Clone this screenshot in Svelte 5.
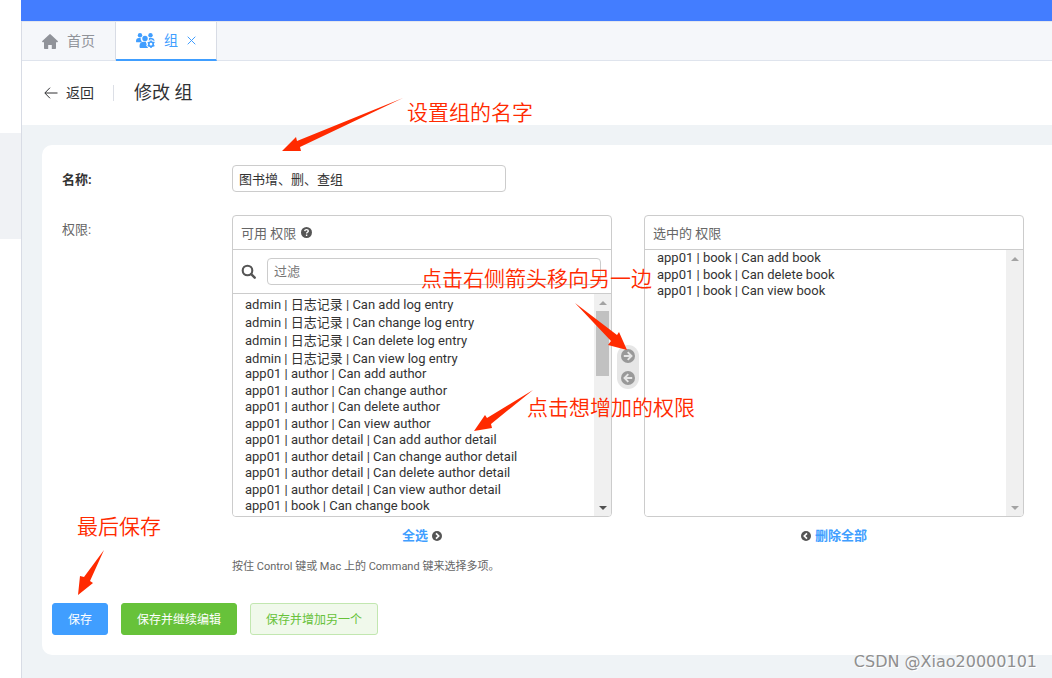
<script>
  const available = [
    'admin | 日志记录 | Can add log entry',
    'admin | 日志记录 | Can change log entry',
    'admin | 日志记录 | Can delete log entry',
    'admin | 日志记录 | Can view log entry',
    'app01 | author | Can add author',
    'app01 | author | Can change author',
    'app01 | author | Can delete author',
    'app01 | author | Can view author',
    'app01 | author detail | Can add author detail',
    'app01 | author detail | Can change author detail',
    'app01 | author detail | Can delete author detail',
    'app01 | author detail | Can view author detail',
    'app01 | book | Can change book'
  ];
  const chosen = [
    'app01 | book | Can add book',
    'app01 | book | Can delete book',
    'app01 | book | Can view book'
  ];
  let name = $state('图书增、删、查组');
  let filter = $state('');
</script>

{#snippet scrollbar(active)}
  <div class="scrollbar" aria-hidden="true">
    <svg width="17" height="17" viewBox="0 0 17 17"><path d="M5 11h8L9 7z" fill="#a3a3a3" /></svg>
    {#if active}<div class="thumb"></div>{/if}
    <svg class="down" width="17" height="17" viewBox="0 0 17 17"><path d="M5 7h8l-4 4z" fill={active ? '#505050' : '#a3a3a3'} /></svg>
  </div>
{/snippet}

<div class="app">
  <aside><div class="side-item"></div></aside>
  <div class="main">
    <div class="topbar"></div>
    <nav class="tabs">
      <a class="tab" href="#home">
        <svg width="16" height="15" viewBox="0 0 16 15" fill="currentColor"><path d="M7.3.4a1 1 0 0 1 1.4 0l7 6.6c.5.5.2 1.2-.5 1.2H14V14c0 .6-.4 1-1 1H9.800v-4H6.200v4H3c-.6 0-1-.4-1-1V8.200H.8C.1 8.200-.2 7.500.3 7z" /></svg>
        <span>首页</span>
      </a>
      <a class="tab current" href="#group">
        <svg width="19" height="15" viewBox="0 0 19 15" fill="currentColor">
          <circle cx="4" cy="2.300" r="2.200" /><circle cx="14.500" cy="2.300" r="2.200" /><circle cx="9" cy="5.500" r="2.700" />
          <path d="M0 8c0-2 1.200-3 3-3h1.700c-.2 1.600.3 2.700 1.200 3.400C5.500 8.700 5 9 4.700 9.200H.6C.2 9.200 0 8.900 0 8zM13 5h2.500c1.800 0 3 1.200 3 3.200-.7-.7-1.400-.9-1.900-.9l-.6-.8h-2l-.6.9-.8.200c.5-.8.6-1.700.4-2.600zM3.500 13c0-2.900 1.500-4.300 4.200-4.300h2.500l-.3 1 .8 1.300-.5 1.800 1.300 1.300.6.9H4.500c-.7 0-1-.6-1-2z" />
          <circle cx="15" cy="11.200" r="2.200" fill="none" stroke="currentColor" stroke-width="1.700" />
          <path d="M15 7.500V9M15 13.500V15M11.700 9.300l1.400.8M17 12.400l1.400.8M11.700 13.200l1.400-.8M17 10l1.400-.8" stroke="currentColor" stroke-width="1.500" />
        </svg>
        <span>组</span>
        <svg width="9" height="9" viewBox="0 0 9 9" fill="none" stroke="currentColor"><path d="M.7.7l7.600 7.600M8.300.7L.7 8.300" /></svg>
      </a>
    </nav>
    <header>
      <a class="back" href="#back">
        <svg width="14" height="12" viewBox="0 0 14 12" fill="none" stroke="currentColor"><path d="M13.500 6H1M6 .7L.8 6 6 11.300" /></svg>
        <span>返回</span>
      </a>
      <h1>修改 组</h1>
    </header>
    <form class="card">
      <div class="row">
        <label class="required" for="name">名称:</label>
        <input class="field name" id="name" bind:value={name} />
      </div>
      <div class="row permissions">
        <label for="available">权限:</label>
        <div class="widget">
          <div class="selector">
            <section class="column">
              <div class="box">
                <h2>可用 权限
                  <svg width="11" height="11" viewBox="0 0 11 11"><circle cx="5.500" cy="5.500" r="5.500" fill="#555" /><path d="M3.700 4.100c.1-1 .8-1.500 1.800-1.500s1.800.5 1.800 1.400c0 1.200-1.700 1.200-1.700 2.400" fill="none" stroke="#fff" stroke-width="1.400" /><path d="M4.900 7.500h1.400v1.400H4.900z" fill="#fff" /></svg>
                </h2>
                <div class="filter">
                  <svg width="15" height="15" viewBox="0 0 15 15" fill="none" stroke="#555"><circle cx="6.500" cy="6.500" r="4.800" stroke-width="2.100" /><path d="M10.200 10.200l3.500 3.500" stroke-width="2.400" stroke-linecap="round" /></svg>
                  <input class="field" aria-label="过滤" placeholder="过滤" bind:value={filter} />
                </div>
                <div class="list">
                  <select id="available" multiple>
                    {#each available as item}<option class:mixed={item.startsWith('admin')}>{item}</option>{/each}
                  </select>
                  {@render scrollbar(true)}
                </div>
              </div>
              <a class="all" href="#all">全选
                <svg width="10" height="10" viewBox="0 0 10 10"><circle cx="5" cy="5" r="5" fill="#555" /><path d="M4 2.300L6.700 5 4 7.700" fill="none" stroke="#fff" stroke-width="1.700" /></svg>
              </a>
            </section>
            <div class="chooser">
              <button type="button" aria-label="选择"><svg width="14" height="14" viewBox="0 0 14 14"><circle cx="7" cy="7" r="7" fill="#999" /><path d="M2.800 7h7.500M6.700 3.200L10.500 7l-3.800 3.800" fill="none" stroke="#e6e6e6" stroke-width="1.900" /></svg></button>
              <button type="button" aria-label="删除"><svg width="14" height="14" viewBox="0 0 14 14"><circle cx="7" cy="7" r="7" fill="#999" /><path d="M11.200 7H3.700M7.300 3.200L3.500 7l3.800 3.800" fill="none" stroke="#e6e6e6" stroke-width="1.900" /></svg></button>
            </div>
            <section class="column">
              <div class="box">
                <h2>选中的 权限</h2>
                <div class="list">
                  <select aria-label="选中的 权限" multiple>
                    {#each chosen as item}<option>{item}</option>{/each}
                  </select>
                  {@render scrollbar(false)}
                </div>
              </div>
              <a class="all" href="#clear">
                <svg width="10" height="10" viewBox="0 0 10 10"><circle cx="5" cy="5" r="5" fill="#555" /><path d="M6 2.300L3.300 5 6 7.700" fill="none" stroke="#fff" stroke-width="1.700" /></svg>
                删除全部</a>
            </section>
          </div>
          <p class="help">按住 Control 键或 Mac 上的 Command 键来选择多项。</p>
        </div>
      </div>
      <div class="actions">
        <button type="button" class="save">保存</button>
        <button type="button" class="continue">保存并继续编辑</button>
        <button type="button" class="another">保存并增加另一个</button>
      </div>
    </form>
  </div>

  <svg class="arrows" width="1052" height="678" viewBox="0 0 1052 678" fill="#ff2a00" aria-hidden="true">
    <path d="M403 98L300 147l1 4h-19l14-14 1 4z" />
    <path d="M575 303l42 32 2-3 8 18-19-5 3-4z" />
    <path d="M533 390l-42 34 1 4-18 3 11-16 2 3z" />
    <path d="M104 550l-14 31 3 2-15 12 2-19 4 1z" />
  </svg>
  <span class="note n1">设置组的名字</span>
  <span class="note n2">点击右侧箭头移向另一边</span>
  <span class="note n3">点击想增加的权限</span>
  <span class="note n4">最后保存</span>
  <span class="watermark">CSDN @Xiao20000101</span>
</div>

<style>
  :global(body) { margin: 0; background: #fff; }
  .app, .app * { box-sizing: border-box; }
  .app {
    position: relative; display: flex; min-height: 100vh; overflow: hidden;
    font-family: Roboto, "Noto Sans CJK SC", sans-serif; font-size: 13px; color: #303133;
  }
  a { text-decoration: none; color: inherit; }
  svg { flex: none; }
  input, select, button { font-family: inherit; }
  aside { flex: none; width: 21px; padding-top: 133px; }
  .side-item { height: 106px; background: #f0f2f5; }
  .main { flex: 1; min-width: 0; background: #eff3f6; border-left: 1px solid #d8dce5; }
  .topbar { height: 21px; margin-left: -1px; background: #437dff; }
  .tabs { display: flex; height: 40px; background: #f5f7fa; border-top: 1px solid #e4e7ed; border-bottom: 1px solid #dfe4ed; }
  .tab { display: flex; align-items: center; gap: 9px; height: 39px; padding: 0 20px 1px; font-size: 14px; color: #909399; border-right: 1px solid #d8dce5; }
  .current { padding-bottom: 0; color: #409eff; background: #fff; border-bottom: 2px solid #409eff; }
  .tab span { line-height: 20px; padding-bottom: 1px; }
  header { display: flex; align-items: center; height: 64px; padding-left: 22px; background: #fff; }
  .back { display: flex; align-items: center; gap: 8px; padding-right: 19px; border-right: 1px solid #dcdfe6; font-size: 14px; line-height: 16px; }
  h1 { margin: 0 0 0 20px; font-size: 18px; font-weight: 400; line-height: 24px; }
  .card { margin: 20px 0 0 20px; padding: 20px 10px; background: #fff; border-radius: 10px 0 0 10px; }
  .row { display: flex; padding-left: 10px; }
  .row > label { flex: none; width: 170px; line-height: 30px; color: #666; }
  .row > .required { font-weight: 700; color: #333; }
  .permissions { margin-top: 20px; }
  .field { height: 27px; padding: 0 6px; border: 1px solid #ccc; border-radius: 4px; background: #fff; color: #333; font-size: 13px; outline: none; }
  .field::placeholder { color: #757575; }
  .name { width: 274px; }
  .widget { flex: 1; min-width: 0; }
  .selector { display: flex; max-width: 792px; }
  .column { flex: 1; min-width: 0; display: flex; flex-direction: column; align-items: center; gap: 10px; }
  .box { display: flex; flex-direction: column; width: 100%; height: 302px; border: 1px solid #ccc; border-radius: 4px; overflow: hidden; }
  h2 { display: flex; flex: none; align-items: center; gap: 5px; height: 34px; margin: 0; padding: 0 8px; border-bottom: 1px solid #ccc; font-size: 13px; font-weight: 400; color: #666; }
  .filter { display: flex; flex: none; align-items: center; gap: 11px; height: 44px; padding: 0 10px 0 8px; border-bottom: 1px solid #ccc; }
  .filter .field { flex: 1; min-width: 0; }
  .list { display: flex; flex: 1; min-height: 0; }
  select { flex: 1; min-width: 0; height: 100%; padding: 0 10px; border: 0; background: #fff; color: #333; font-size: 13px; outline: none; scrollbar-width: none; }
  select::-webkit-scrollbar { display: none; }
  option { min-height: 0; height: 17px; padding: 0 2px; line-height: 16px; }
  option:nth-child(even) { height: 16px; }
  option.mixed { height: 18px; line-height: 18px; }
  .scrollbar { display: flex; flex-direction: column; width: 17px; background: #f0f0f0; }
  .thumb { width: 13px; height: 65px; margin-left: 2px; background: #c1c1c1; }
  .down { margin-top: auto; }
  .all { display: flex; align-items: center; gap: 4px; color: #409eff; font-weight: 700; line-height: 18px; }
  .chooser { flex: none; align-self: flex-start; display: flex; flex-direction: column; gap: 8px; width: 22px; margin: 130px 5px 0; padding: 4px; border-radius: 11px; background: #e6e6e6; }
  .chooser button { display: flex; padding: 0; border: 0; background: none; }
  .help { margin: 13px 0 0; font-size: 11px; line-height: 18px; color: #666; }
  .actions { display: flex; gap: 13px; margin-top: 27px; }
  .actions button { height: 32px; padding: 0 15px 1px; border: 1px solid; border-radius: 3px; font-size: 12px; }
  .actions .save { color: #fff; background: #409eff; border-color: #409eff; }
  .actions .continue { color: #fff; background: #67c23a; border-color: #67c23a; }
  .actions .another { color: #67c23a; background: #f0f9eb; border-color: #c2e7b0; }
  .arrows { position: absolute; left: 0; top: 0; pointer-events: none; }
  .note { position: absolute; font-size: 21px; line-height: 28px; color: #ff2a00; white-space: nowrap; font-weight: 350; pointer-events: none; font-family: "Noto Sans CJK SC", sans-serif; }
  .n1 { left: 407px; top: 97px; }
  .n2 { left: 421px; top: 263px; }
  .n3 { left: 527px; top: 392px; }
  .n4 { left: 77px; top: 511px; }
  .watermark { position: absolute; right: 15px; bottom: 6px; font-family: "DejaVu Sans", sans-serif; font-size: 16px; line-height: 20px; color: #8f8f8f; text-shadow: 1px 1px #fff; }
</style>
